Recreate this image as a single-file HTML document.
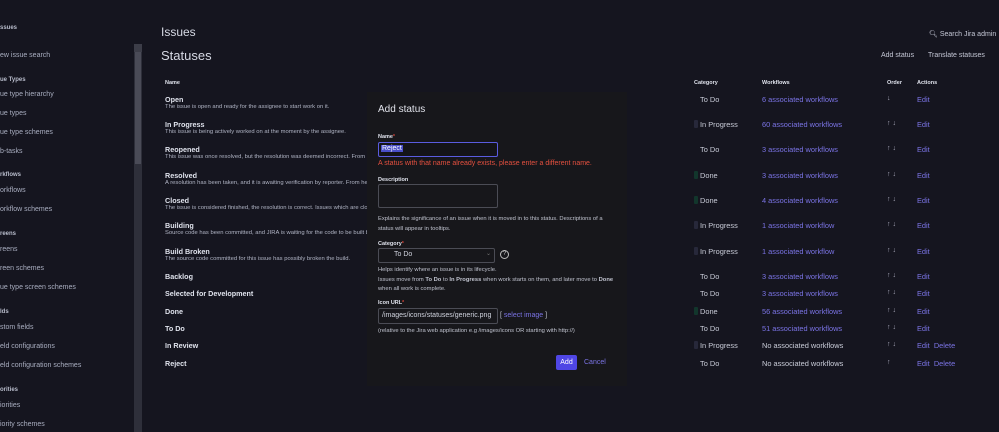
<!DOCTYPE html>
<html><head><meta charset="utf-8"><style>
*{margin:0;padding:0;box-sizing:border-box}
body{width:999px;height:432px;overflow:hidden;background:#15151f;font-family:"Liberation Sans",sans-serif;color:#c7cad6;position:relative}
.a{position:absolute;white-space:nowrap}
.sh{font-size:6px;font-weight:bold;color:#b8bccb}
.si{font-size:7px;color:#a9aec0}
.h{font-size:7.2px;font-weight:bold;color:#dfe2ec}
.d{font-size:5.85px;color:#b0b4c4}
.c{font-size:7.4px;color:#c9ccd8}
.a.lk,.c.lk,span.lk{color:#7b74e6}
.bar{position:absolute;width:4px;height:8px;background:#27283a;border-radius:1px}
.bar.g{background:#12362c}
.ar{font-size:7px;color:#aab}
.dl{font-size:6px;font-weight:bold;color:#dfe2ec}
.st{color:#e5483a;font-size:5px}
.hp{font-size:5.8px;color:#c0c3cf}
</style></head><body>
<!-- sidebar -->
<div class="a sh" style="left:0;top:25px">ssues</div>
<div class="a si" style="left:0;top:52px">ew issue search</div>
<div class="a sh" style="left:0;top:77px">ue Types</div>
<div class="a si" style="left:0;top:91px">ue type hierarchy</div>
<div class="a si" style="left:0;top:110px">ue types</div>
<div class="a si" style="left:0;top:129px">ue type schemes</div>
<div class="a si" style="left:0;top:148px">b-tasks</div>
<div class="a sh" style="left:0;top:172px">rkflows</div>
<div class="a si" style="left:0;top:187px">orkflows</div>
<div class="a si" style="left:0;top:206px">orkflow schemes</div>
<div class="a sh" style="left:0;top:231px">reens</div>
<div class="a si" style="left:0;top:246px">reens</div>
<div class="a si" style="left:0;top:265px">reen schemes</div>
<div class="a si" style="left:0;top:284px">ue type screen schemes</div>
<div class="a sh" style="left:0;top:309px">lds</div>
<div class="a si" style="left:0;top:324px">stom fields</div>
<div class="a si" style="left:0;top:343px">eld configurations</div>
<div class="a si" style="left:0;top:362px">eld configuration schemes</div>
<div class="a sh" style="left:0;top:387px">orities</div>
<div class="a si" style="left:0;top:402px">iorities</div>
<div class="a si" style="left:0;top:421px">iority schemes</div>
<div class="a" style="left:134px;top:44px;width:8px;height:388px;background:#2e2f3a"></div>
<div class="a" style="left:135px;top:52px;width:6px;height:112px;background:#4a4b57"></div>
<div class="a" style="left:134px;top:44px;width:8px;height:8px;background:#3c3d48"></div>
<!-- headers -->
<div class="a" style="left:161px;top:25px;font-size:12px;color:#d6d9e4">Issues</div>
<div class="a" style="left:161px;top:48px;font-size:13px;color:#d6d9e4">Statuses</div>
<div class="a" style="left:929px;top:30px;font-size:7px;color:#c5c8d6">&#x1F50D;&#xFE0E; Search Jira admin</div>
<div class="a" style="left:881px;top:52px;font-size:7px;color:#c5c8d6">Add status</div>
<div class="a" style="left:928px;top:52px;font-size:7px;color:#c5c8d6">Translate statuses</div>
<div class="a dl" style="left:165px;top:80px;font-size:5.5px">Name</div>
<div class="a dl" style="left:694px;top:80px;font-size:5.5px">Category</div>
<div class="a dl" style="left:762px;top:80px;font-size:5.5px">Workflows</div>
<div class="a dl" style="left:887px;top:80px;font-size:5.5px">Order</div>
<div class="a dl" style="left:917px;top:80px;font-size:5.5px">Actions</div>
<!-- names -->
<div class="a h" style="left:165px;top:95px">Open</div><div class="a d" style="left:165px;top:104px">The issue is open and ready for the assignee to start work on it.</div>
<div class="a h" style="left:165px;top:120px">In Progress</div><div class="a d" style="left:165px;top:129px">This issue is being actively worked on at the moment by the assignee.</div>
<div class="a h" style="left:165px;top:145px">Reopened</div><div class="a d" style="left:165px;top:154px">This issue was once resolved, but the resolution was deemed incorrect. From h</div>
<div class="a h" style="left:165px;top:171px">Resolved</div><div class="a d" style="left:165px;top:180px">A resolution has been taken, and it is awaiting verification by reporter. From he</div>
<div class="a h" style="left:165px;top:196px">Closed</div><div class="a d" style="left:165px;top:205px">The issue is considered finished, the resolution is correct. Issues which are clos</div>
<div class="a h" style="left:165px;top:221px">Building</div><div class="a d" style="left:165px;top:230px">Source code has been committed, and JIRA is waiting for the code to be built b</div>
<div class="a h" style="left:165px;top:247px">Build Broken</div><div class="a d" style="left:165px;top:256px">The source code committed for this issue has possibly broken the build.</div>
<div class="a h" style="left:165px;top:272px">Backlog</div>
<div class="a h" style="left:165px;top:289px">Selected for Development</div>
<div class="a h" style="left:165px;top:307px">Done</div>
<div class="a h" style="left:165px;top:324px">To Do</div>
<div class="a h" style="left:165px;top:341px">In Review</div>
<div class="a h" style="left:165px;top:359px">Reject</div>
<div class="a" style="left:367px;top:92px;width:260px;height:294px;background:#17171b"></div>
<!-- right columns -->
<div class="a c" style="left:700px;top:95px">To Do</div><div class="a c lk" style="left:762px;top:95px">6 associated workflows</div><div class="a ar" style="left:887px;top:95px">↓</div><div class="a c lk" style="left:917px;top:95px">Edit</div>
<div class="bar" style="left:694px;top:120px"></div><div class="a c" style="left:700px;top:120px">In Progress</div><div class="a c lk" style="left:762px;top:120px">60 associated workflows</div><div class="a ar" style="left:887px;top:120px">↑ ↓</div><div class="a c lk" style="left:917px;top:120px">Edit</div>
<div class="a c" style="left:700px;top:145px">To Do</div><div class="a c lk" style="left:762px;top:145px">3 associated workflows</div><div class="a ar" style="left:887px;top:145px">↑ ↓</div><div class="a c lk" style="left:917px;top:145px">Edit</div>
<div class="bar g" style="left:694px;top:171px"></div><div class="a c" style="left:700px;top:171px">Done</div><div class="a c lk" style="left:762px;top:171px">3 associated workflows</div><div class="a ar" style="left:887px;top:171px">↑ ↓</div><div class="a c lk" style="left:917px;top:171px">Edit</div>
<div class="bar g" style="left:694px;top:196px"></div><div class="a c" style="left:700px;top:196px">Done</div><div class="a c lk" style="left:762px;top:196px">4 associated workflows</div><div class="a ar" style="left:887px;top:196px">↑ ↓</div><div class="a c lk" style="left:917px;top:196px">Edit</div>
<div class="bar" style="left:694px;top:221px"></div><div class="a c" style="left:700px;top:221px">In Progress</div><div class="a c lk" style="left:762px;top:221px">1 associated workflow</div><div class="a ar" style="left:887px;top:221px">↑ ↓</div><div class="a c lk" style="left:917px;top:221px">Edit</div>
<div class="bar" style="left:694px;top:247px"></div><div class="a c" style="left:700px;top:247px">In Progress</div><div class="a c lk" style="left:762px;top:247px">1 associated workflow</div><div class="a ar" style="left:887px;top:247px">↑ ↓</div><div class="a c lk" style="left:917px;top:247px">Edit</div>
<div class="a c" style="left:700px;top:272px">To Do</div><div class="a c lk" style="left:762px;top:272px">3 associated workflows</div><div class="a ar" style="left:887px;top:272px">↑ ↓</div><div class="a c lk" style="left:917px;top:272px">Edit</div>
<div class="a c" style="left:700px;top:289px">To Do</div><div class="a c lk" style="left:762px;top:289px">3 associated workflows</div><div class="a ar" style="left:887px;top:289px">↑ ↓</div><div class="a c lk" style="left:917px;top:289px">Edit</div>
<div class="bar g" style="left:694px;top:307px"></div><div class="a c" style="left:700px;top:307px">Done</div><div class="a c lk" style="left:762px;top:307px">56 associated workflows</div><div class="a ar" style="left:887px;top:307px">↑ ↓</div><div class="a c lk" style="left:917px;top:307px">Edit</div>
<div class="a c" style="left:700px;top:324px">To Do</div><div class="a c lk" style="left:762px;top:324px">51 associated workflows</div><div class="a ar" style="left:887px;top:324px">↑ ↓</div><div class="a c lk" style="left:917px;top:324px">Edit</div>
<div class="bar" style="left:694px;top:341px"></div><div class="a c" style="left:700px;top:341px">In Progress</div><div class="a c" style="left:762px;top:341px">No associated workflows</div><div class="a ar" style="left:887px;top:341px">↑ ↓</div><div class="a c lk" style="left:917px;top:341px">Edit&nbsp;&nbsp;Delete</div>
<div class="a c" style="left:700px;top:359px">To Do</div><div class="a c" style="left:762px;top:359px">No associated workflows</div><div class="a ar" style="left:887px;top:359px">↑</div><div class="a c lk" style="left:917px;top:359px">Edit&nbsp;&nbsp;Delete</div>
<!-- dialog -->
<div class="a" style="left:378px;top:104px;font-size:10px;color:#e0e2ea">Add status</div>
<div class="a dl" style="left:378px;top:134px;font-size:5.5px">Name<span class="st">*</span></div>
<div class="a" style="left:378px;top:142px;width:120px;height:15px;border:1.5px solid #5a5ce0;border-radius:2px;background:#141418"></div>
<div class="a" style="left:381px;top:145px;font-size:7px;color:#fff;background:#4a4fc9;padding:0 1px">Reject</div>
<div class="a" style="left:378px;top:160px;font-size:7px;color:#e4503f">A status with that name already exists, please enter a different name.</div>
<div class="a dl" style="left:378px;top:177px;font-size:5.5px">Description</div>
<div class="a" style="left:378px;top:184px;width:120px;height:24px;border:1px solid #4b4c55;border-radius:2px"></div>
<div class="a hp" style="left:378px;top:215px;line-height:9.5px">Explains the significance of an issue when it is moved in to this status. Descriptions of a<br>status will appear in tooltips.</div>
<div class="a dl" style="left:378px;top:241px;font-size:5.5px">Category<span class="st">*</span></div>
<div class="a" style="left:378px;top:248px;width:117px;height:15px;border:1px solid #4b4c55;border-radius:2px"></div>
<div class="a" style="left:394px;top:251px;font-size:7px;color:#d0d3de">To Do</div>
<div class="a" style="left:486px;top:250px;font-size:6px;color:#777">⌄</div>
<div class="a" style="left:500px;top:250px;width:9px;height:9px;border:1px solid #bbb;border-radius:50%;font-size:6px;text-align:center;line-height:7px;color:#ccc">?</div>
<div class="a hp" style="left:378px;top:266px;line-height:9.7px">Helps identify where an issue is in its lifecycle.<br>Issues move from <b>To Do</b> to <b>In Progress</b> when work starts on them, and later move to <b>Done</b><br>when all work is complete.</div>
<div class="a dl" style="left:378px;top:300px;font-size:5.5px">Icon URL<span class="st">*</span></div>
<div class="a" style="left:378px;top:308px;width:120px;height:16px;border:1px solid #4b4c55;border-radius:2px"></div>
<div class="a" style="left:382px;top:312px;font-size:7px;color:#d0d3de">/images/icons/statuses/generic.png</div>
<div class="a" style="left:500px;top:312px;font-size:7px;color:#c0c3cf">[ <span class="lk">select image</span> ]</div>
<div class="a hp" style="left:378px;top:328px">(relative to the Jira web application e.g /images/icons OR starting with http://)</div>
<div class="a" style="left:556px;top:355px;width:21px;height:15px;background:#4f46e5;border-radius:2px;color:#fff;font-size:7px;text-align:center;line-height:15px">Add</div>
<div class="a lk" style="left:584px;top:359px;font-size:7px">Cancel</div>
</body></html>
